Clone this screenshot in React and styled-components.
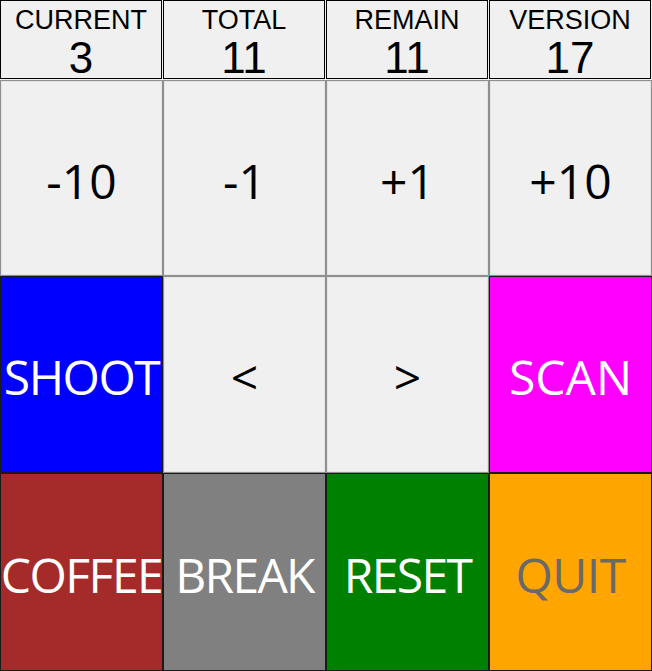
import React from "react";
import styled, { createGlobalStyle } from "styled-components";

const GlobalStyle = createGlobalStyle`
  html, body {
    margin: 0;
    padding: 0;
    background: #f0f0f0;
  }
`;

const Screen = styled.div`
  width: 652px;
  height: 671px;
  display: grid;
  grid-template-columns: repeat(4, 163px);
  grid-template-rows: 80px 196px 197px 198px;
  background: #f0f0f0;
  overflow: hidden;
`;

const Stat = styled.div`
  width: 162px;
  height: 79px;
  box-sizing: border-box;
  border: 1px solid #000;
  background: #f0f0f0;
  display: flex;
  flex-direction: column;
  align-items: center;
  font-family: "Liberation Sans", Arial, sans-serif;
  color: #000;
`;

const StatLabel = styled.div`
  font-size: 27px;
  line-height: 1;
  margin-top: 6px;
`;

const StatValue = styled.div`
  font-size: 44px;
  line-height: 1;
  margin-top: 2px;
`;

const Button = styled.button`
  box-sizing: border-box;
  width: 100%;
  height: 100%;
  margin: 0;
  padding: 4px 0 0;
  display: flex;
  align-items: center;
  justify-content: center;
  overflow: hidden;
  white-space: nowrap;
  font-family: "Open Sans", "Noto Sans", sans-serif;
  font-size: 48px;
  letter-spacing: ${(p) => p.$spacing || "0"};
  background: ${(p) => p.$bg || "#f0f0f0"};
  color: ${(p) => p.$fg || "#000"};
  border: 1px solid ${(p) => (p.$bg ? "#1a1a1a" : "#8f8f8f")};
  box-shadow: ${(p) => (p.$bg ? "none" : "inset 0 0 0 1px #e4e4e4")};
`;

const stats = [
  ["CURRENT", 3],
  ["TOTAL", 11],
  ["REMAIN", 11],
  ["VERSION", 17],
];

export default function App() {
  return (
    <>
      <GlobalStyle />
      <Screen>
        {stats.map(([label, value]) => (
          <Stat key={label}>
            <StatLabel>{label}</StatLabel>
            <StatValue>{value}</StatValue>
          </Stat>
        ))}
        <Button>-10</Button>
        <Button>-1</Button>
        <Button>+1</Button>
        <Button>+10</Button>
        <Button $bg="#0000ff" $fg="#fff" $spacing="-1.5px">SHOOT</Button>
        <Button>&lt;</Button>
        <Button>&gt;</Button>
        <Button $bg="#ff00ff" $fg="#fff">SCAN</Button>
        <Button $bg="#a52a2a" $fg="#fff" $spacing="-1.5px">COFFEE</Button>
        <Button $bg="#808080" $fg="#fff" $spacing="-1.7px">BREAK</Button>
        <Button $bg="#008000" $fg="#fff" $spacing="-1.6px">RESET</Button>
        <Button $bg="#ffa500" $fg="#696969" $spacing="-0.5px">QUIT</Button>
      </Screen>
    </>
  );
}
